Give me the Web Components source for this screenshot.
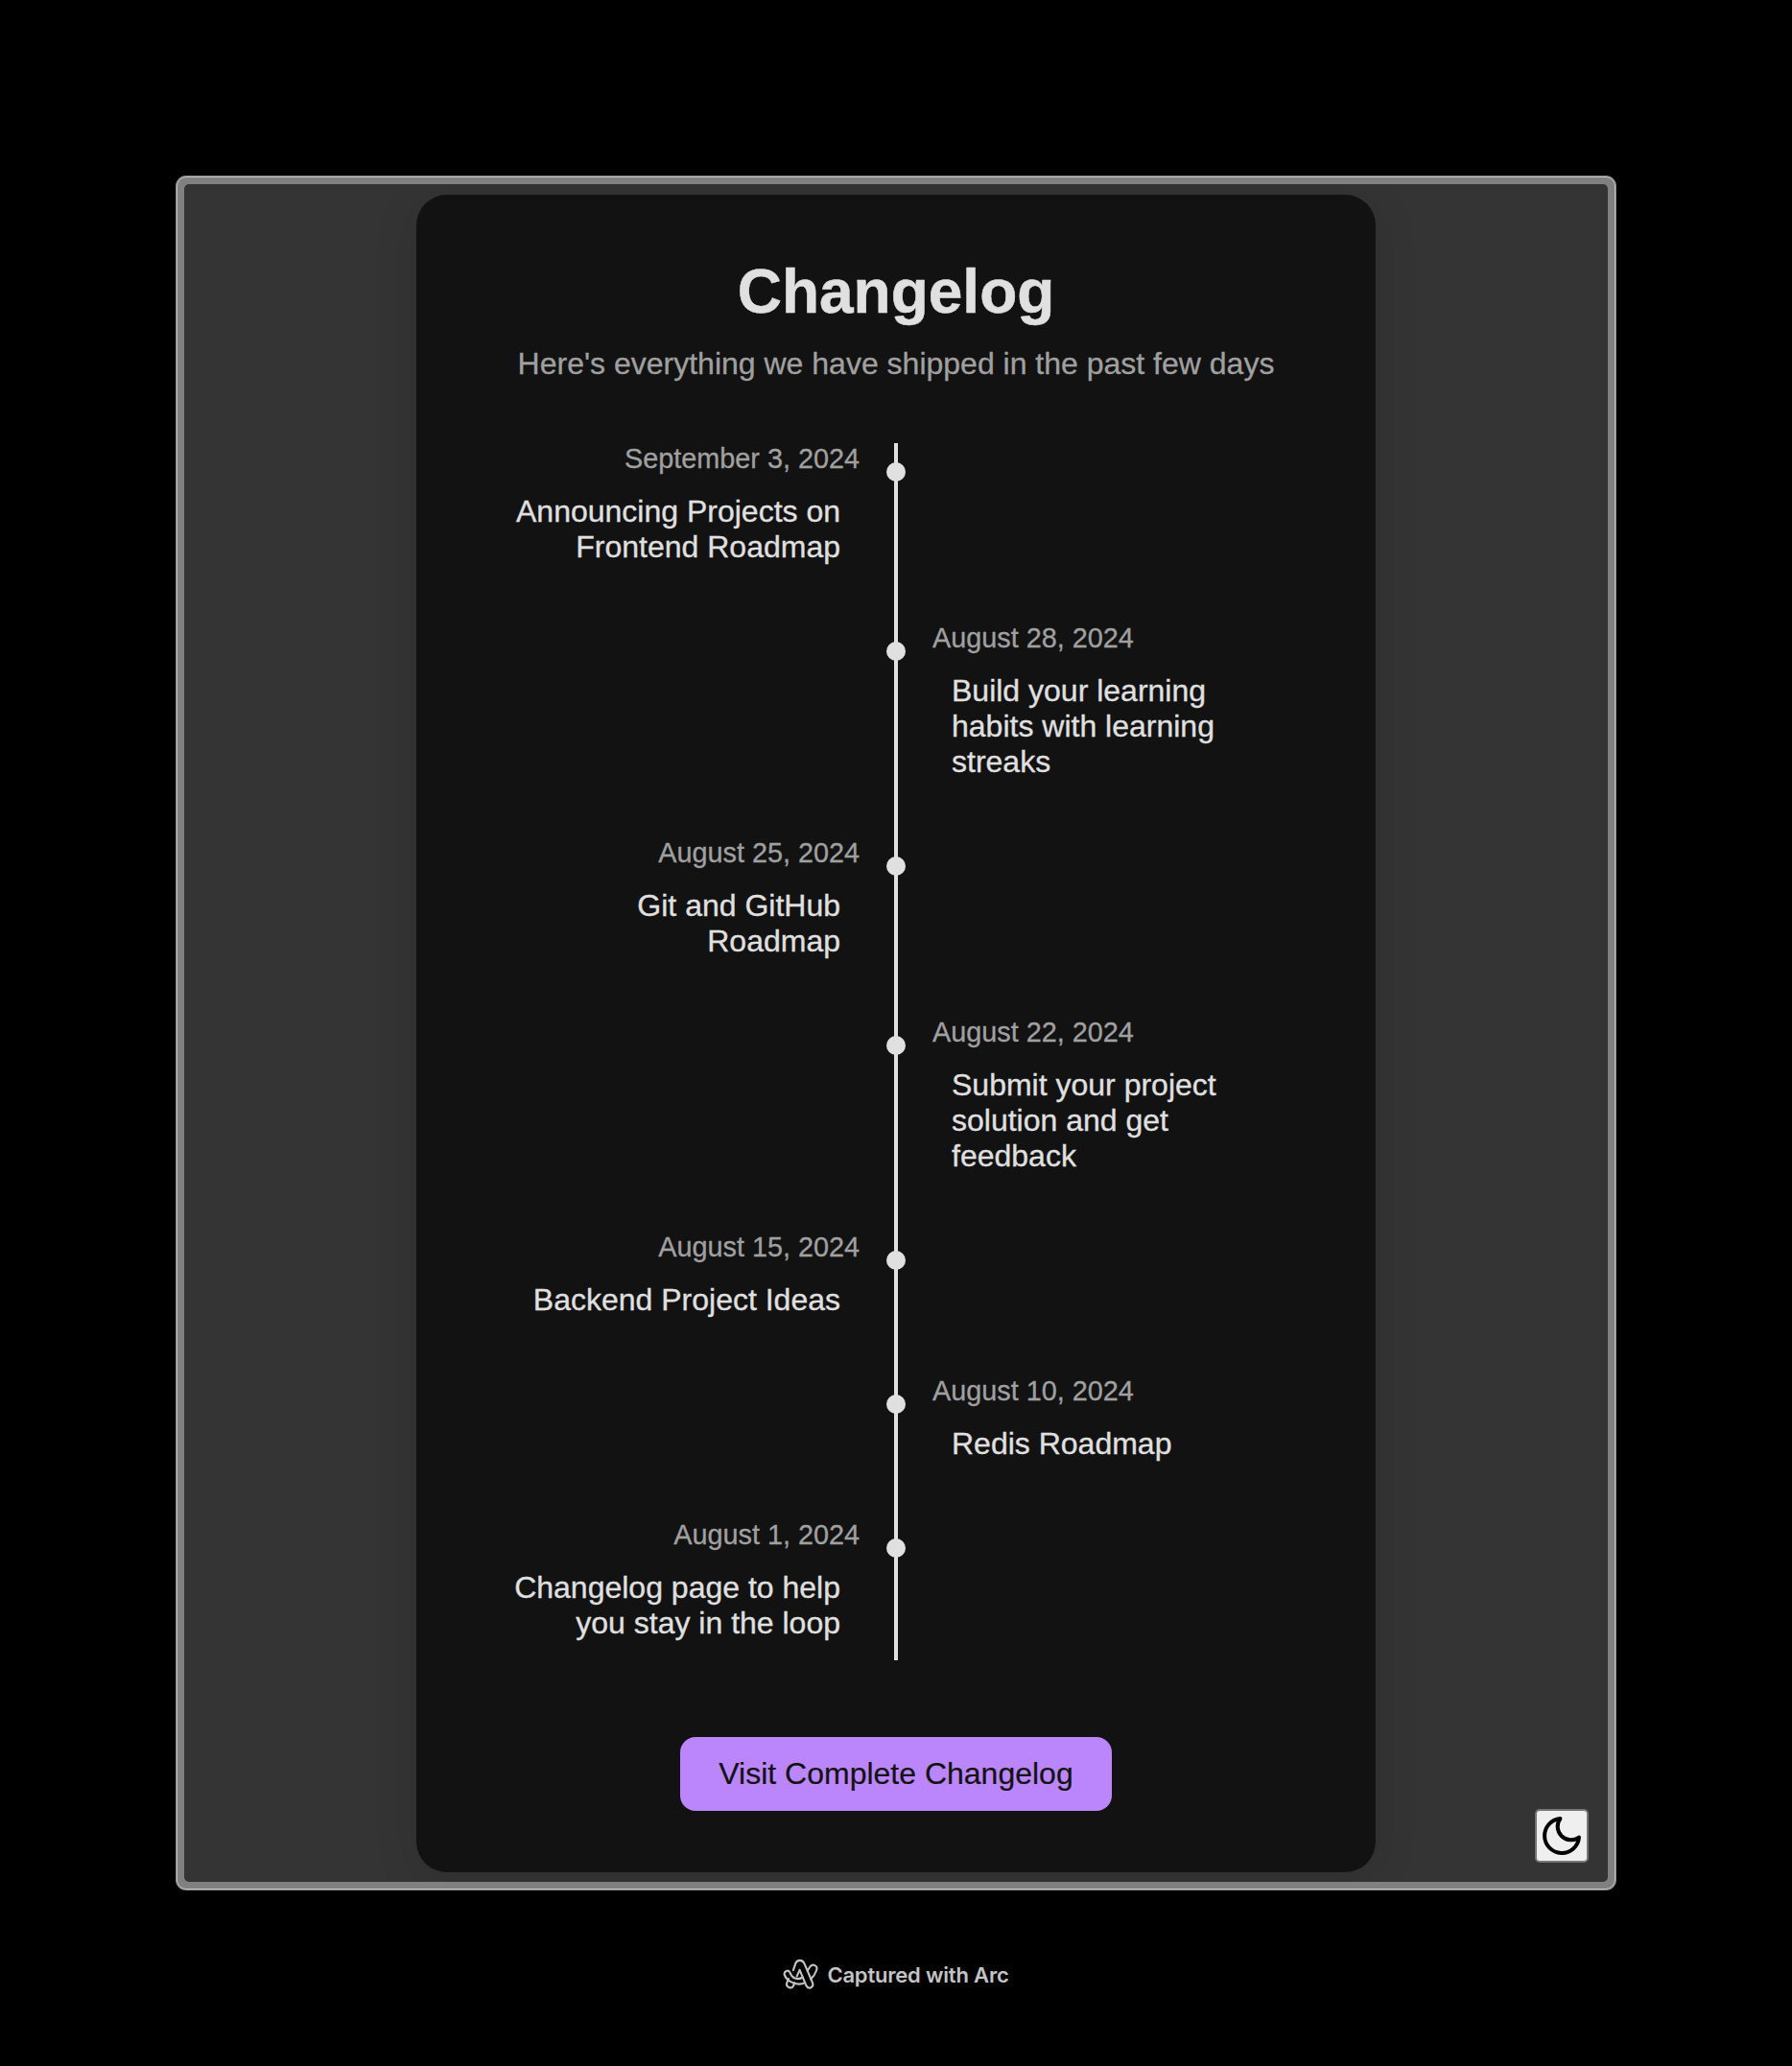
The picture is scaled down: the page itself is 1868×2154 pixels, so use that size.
<!DOCTYPE html>
<html lang="en">
<head>
<meta charset="utf-8">
<title>Changelog</title>
<style>
html,body{margin:0;background:#000;height:2154px;overflow:hidden}
body{font-family:"Liberation Sans",Arial,sans-serif;color:#e0e0e0}
</style>
</head>
<body>
<capture-frame>
  <changelog-card heading="Changelog" subtitle="Here's everything we have shipped in the past few days">
    <changelog-entry date="September 3, 2024">Announcing Projects on Frontend Roadmap</changelog-entry>
    <changelog-entry date="August 28, 2024" side="right">Build your learning habits with learning streaks</changelog-entry>
    <changelog-entry date="August 25, 2024">Git and GitHub Roadmap</changelog-entry>
    <changelog-entry date="August 22, 2024" side="right">Submit your project solution and get feedback</changelog-entry>
    <changelog-entry date="August 15, 2024">Backend Project Ideas</changelog-entry>
    <changelog-entry date="August 10, 2024" side="right">Redis Roadmap</changelog-entry>
    <changelog-entry date="August 1, 2024">Changelog page to help you stay in the loop</changelog-entry>
    <action-button slot="action">Visit Complete Changelog</action-button>
  </changelog-card>
  <theme-toggle slot="toggle"></theme-toggle>
  <arc-credit slot="credit">Captured with Arc</arc-credit>
</capture-frame>
<script>
const define = (name, html, setup) => customElements.define(name, class extends HTMLElement {
  constructor() {
    super();
    const t = document.createElement('template');
    t.innerHTML = html;
    this.attachShadow({mode: 'open'}).append(t.content.cloneNode(true));
  }
  connectedCallback() { if (setup) setup(this, this.shadowRoot); }
});

define('capture-frame', `
<style>
:host{display:flex;flex-direction:column;align-items:center;box-sizing:border-box;height:2154px;padding-top:184px}
.window{box-sizing:border-box;width:1500px;height:1786px;border:1px solid #c4c4c4;border-radius:10px;background:#808080;padding:7px;box-shadow:0 0 0 1px #808080}
.page{position:relative;box-sizing:border-box;width:1484px;height:1770px;border-radius:5px;background:#343434;padding-top:11px;display:flex;justify-content:center;align-items:flex-start;overflow:hidden}
.toggle{position:absolute;right:20px;bottom:20px}
</style>
<div class="window"><div class="page"><slot></slot><div class="toggle"><slot name="toggle"></slot></div></div></div>
<slot name="credit"></slot>`);

define('changelog-card', `
<style>
:host{display:flex;flex-direction:column;align-items:center;box-sizing:border-box;width:1000px;height:1749px;padding-top:64px;border-radius:32px;background:#121212;box-shadow:0 8px 48px rgba(0,0,0,.1)}
h1{margin:0;font-size:64px;line-height:74px;font-weight:700;-webkit-text-stroke:.5px}
p{margin:20px 0 0;font-size:32px;line-height:37px;color:#a0a0a0;-webkit-text-stroke:.3px}
.timeline{width:100%;margin-top:64px;height:1269px;background:linear-gradient(#e0e0e0,#e0e0e0) center/4px 100% no-repeat}
.action{margin-top:80px}
</style>
<h1></h1><p></p>
<div class="timeline"><slot></slot></div>
<div class="action"><slot name="action"></slot></div>`, (el, root) => {
  root.querySelector('h1').textContent = el.getAttribute('heading');
  root.querySelector('p').textContent = el.getAttribute('subtitle');
});

define('changelog-entry', `
<style>
:host{display:grid;grid-template-columns:1fr 20px 1fr;column-gap:28px;padding-bottom:20px;margin-bottom:40px;-webkit-text-stroke:.3px}
.dot{grid-column:2;grid-row:1;width:20px;height:20px;margin-top:20px;border-radius:50%;background:#e0e0e0}
.body{grid-column:1;grid-row:1;display:flex;flex-direction:column;align-items:flex-end;text-align:right}
:host([side=right]) .body{grid-column:3;align-items:flex-start;text-align:left}
time{font-size:28.8px;line-height:33px;color:#a0a0a0}
.text{width:350px;margin:20px 20px 0;font-size:32px;line-height:37px}
</style>
<div class="body"><time></time><div class="text"><slot></slot></div></div>
<div class="dot"></div>`, (el, root) => {
  root.querySelector('time').textContent = el.getAttribute('date');
});

define('action-button', `
<style>
:host{display:block}
button{display:block;box-sizing:border-box;width:450px;height:77px;padding:0;border:0;border-radius:16px;background:#bb86fc;color:#121212;font:inherit;font-size:32px;line-height:77px;-webkit-text-stroke:.2px}
</style>
<button><slot></slot></button>`);

define('theme-toggle', `
<style>
:host{display:block}
button{display:flex;align-items:center;justify-content:center;box-sizing:border-box;width:56px;height:56px;padding:0;border:2px solid #767676;border-radius:5px;background:#efefef;color:#000}
svg{display:block;flex:none}
</style>
<button aria-label="Toggle theme"><svg width="48" height="48" viewBox="0 0 24 24" fill="none" stroke="currentColor" stroke-width="2" stroke-linecap="round" stroke-linejoin="round"><path d="M21 12.79A9 9 0 1 1 11.21 3 7 7 0 0 0 21 12.79z"/></svg></button>`);

define('arc-credit', `
<style>
:host{display:flex;align-items:center;gap:8px;margin-top:71px;height:36px;color:#c4c4c4;font-family:Inter,sans-serif;font-weight:600;font-size:22px;letter-spacing:-.19px;line-height:36px;white-space:nowrap}
svg{display:block}
</style>
<svg width="38" height="36" viewBox="0 0 38 36" fill="none" stroke="currentColor" stroke-width="2.1" stroke-linejoin="round" stroke-linecap="round">
<path d="M10.900 13.200 13.300 6.200C14.800 1.700 20.600 1.700 22.400 6.200L31 26.200C32.800 31.100 26.600 33.700 24.500 29.300L17.600 12.800 14.600 19.600"/>
<path d="M5.900 22 4.300 26.200C2.600 30.700 9.200 33.500 11.100 29.300L12.300 26.200"/>
<path d="M11 20.600C9.300 19.400 8.300 17.900 7.600 15.800C6 12 .6 14 1.800 18.200C3.700 23.600 10.500 27.600 17 27.600C19.200 27.600 21 27.200 23 26.400"/>
<path d="M11 20.600C13.600 22.400 17.500 22.500 20.600 20.500"/>
<path d="M25.700 13.800 28.200 9.800C30.800 5.800 36.800 8.200 35.200 13C34 16.700 31.900 19.800 29 22.400"/>
</svg>
<span><slot></slot></span>`);
</script>
</body>
</html>
